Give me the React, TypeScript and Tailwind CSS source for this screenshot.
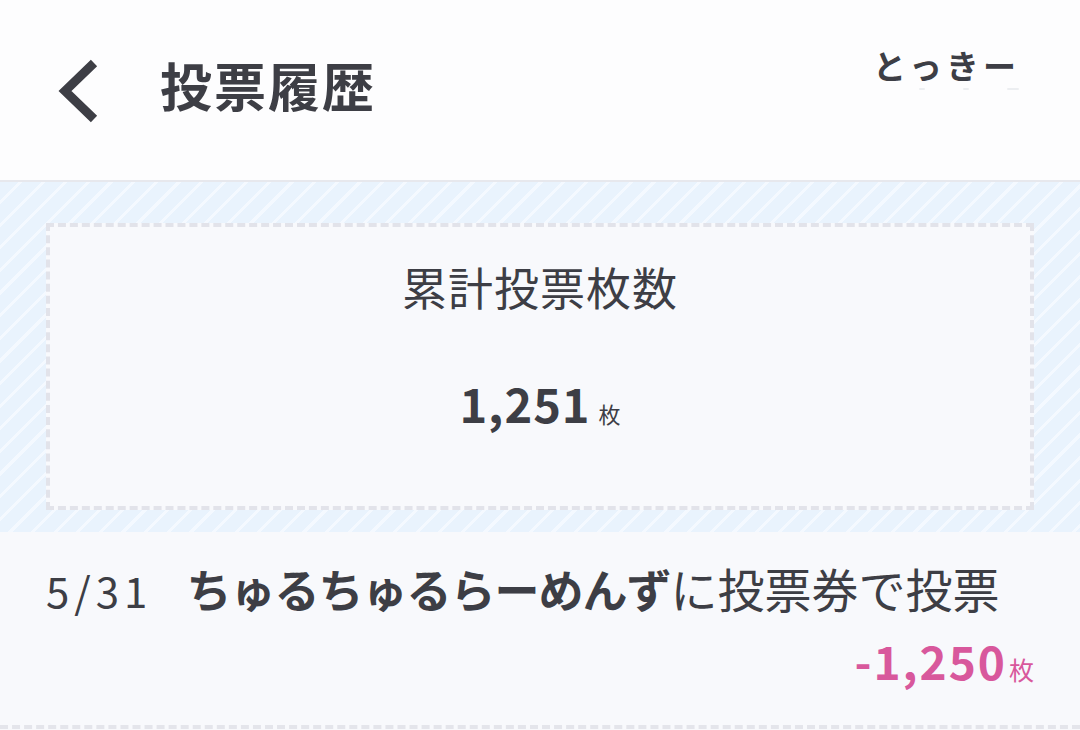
import React from 'react'

const jp = 'font-["Noto_Sans_CJK_JP","Noto_Sans",sans-serif]'

function BackIcon() {
  return (
    <svg width="50" height="66" viewBox="0 0 50 66" className="shrink-0">
      <polyline
        points="40,5 11,33 40,61"
        fill="none"
        stroke="#3d3e45"
        strokeWidth="9"
        strokeLinecap="butt"
        strokeLinejoin="miter"
      />
    </svg>
  )
}

interface HistoryItem {
  date: string
  target: string
  action: string
  amount: string
}

const items: HistoryItem[] = [
  {
    date: '5/31',
    target: 'ちゅるちゅるらーめんず',
    action: 'に投票券で投票',
    amount: '-1,250',
  },
]

export default function App() {
  return (
    <div className={`${jp} h-[730px] w-[1080px] overflow-hidden bg-[#f8f9fc] text-[#3d3e45]`}>
      <header className="flex h-[182px] items-start border-b-2 border-[#e7e8ed] bg-[#fdfdfe]">
        <div className="ml-[54px] mt-[58px]">
          <BackIcon />
        </div>
        <h1 className="ml-[56px] mt-[53px] text-[52px] font-bold leading-[64px] tracking-[2px]">
          投票履歴
        </h1>
        <div className="ml-auto mr-[60px] mt-[43px] flex flex-col">
          <p className="text-[33px] font-bold leading-[44px] tracking-[4px]">とっきー</p>
          <div className="mt-[1px] flex gap-[38px] pl-[46px]">
            <span className="h-[2px] w-[6px] rounded bg-[#eceef1]" />
            <span className="h-[2px] w-[6px] rounded bg-[#eceef1]" />
            <span className="h-[2px] w-[12px] rounded bg-[#eceef1]" />
          </div>
        </div>
      </header>

      <section className="bg-[repeating-linear-gradient(135deg,#e9f3fd_0px,#e9f3fd_13px,#f4f9ff_13px,#f4f9ff_16px)] px-[46px] pb-[22px] pt-[41px]">
        <div className="flex h-[287px] flex-col items-center border-4 border-dashed border-[#e2e3ea] bg-[#f8f9fc]">
          <p className="mt-[30px] text-[45px] leading-[60px] tracking-[1px]">累計投票枚数</p>
          <p className="mt-[56px] flex items-baseline leading-[60px]">
            <span className="text-[47px] font-bold tracking-[1px]">1,251</span>
            <span className="ml-[8px] text-[22px]">枚</span>
          </p>
        </div>
      </section>

      <ul>
        {items.map((item, i) => (
          <li key={i} className="border-b-4 border-dashed border-[#e4e5eb] px-[46px] pb-[34px] pt-[28px]">
            <div className="flex items-baseline text-[45px] leading-[56px] whitespace-nowrap">
              <span className="mr-[34px] text-[42px] tracking-[5px]">{item.date}</span>
              <span className="font-bold tracking-[-1px]">{item.target}</span>
              <span className="text-[47px]">{item.action}</span>
            </div>
            <div className="mt-[20px] flex items-baseline justify-end text-[#d8589c] leading-[44px]">
              <span className="text-[46px] font-bold tracking-[2px]">{item.amount}</span>
              <span className="ml-[2px] text-[25px]">枚</span>
            </div>
          </li>
        ))}
      </ul>
    </div>
  )
}
